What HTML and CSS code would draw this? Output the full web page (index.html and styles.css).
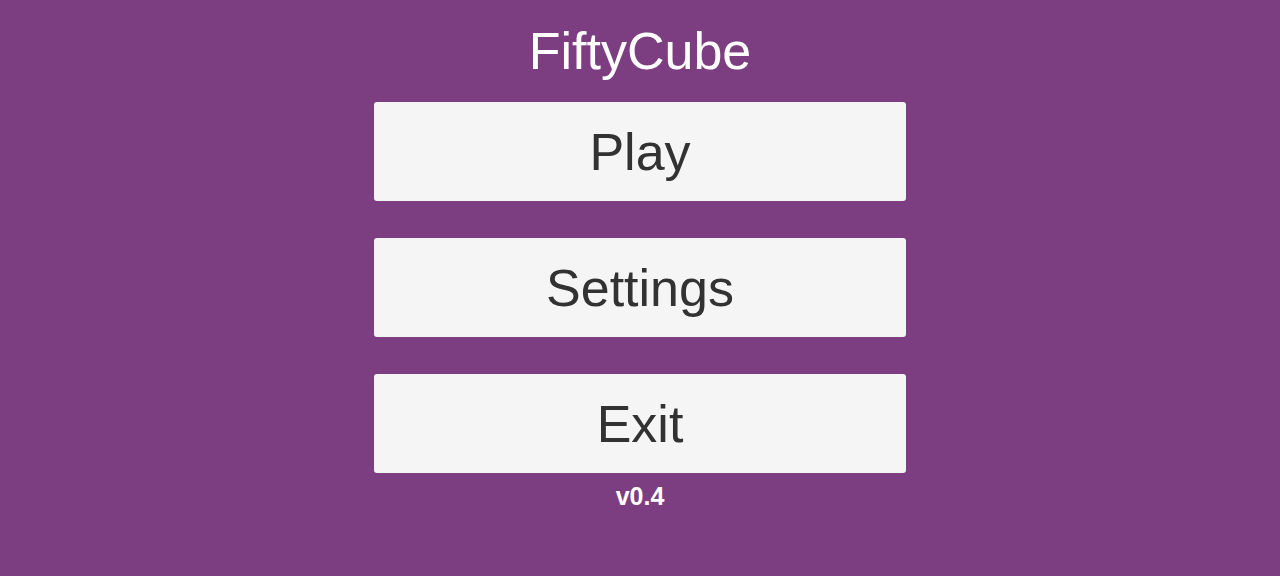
FILE: index.html
```html
<!DOCTYPE html>
<html>
<head>
<meta charset="utf-8">
<link rel="stylesheet" href="styles.css">
</head>
<body>
<main class="menu">
  <h1 class="title">FiftyCube</h1>
  <div class="buttons">
    <button class="btn">Play</button>
    <button class="btn">Settings</button>
    <button class="btn">Exit</button>
  </div>
  <div class="version">v0.4</div>
</main>
</body>
</html>
```

FILE: styles.css
```css
html, body {
  margin: 0;
  padding: 0;
  height: 100%;
}
body {
  background: #7d3e81;
  font-family: "Liberation Sans", Arial, sans-serif;
  overflow: hidden;
}
.menu {
  display: flex;
  flex-direction: column;
  align-items: center;
  padding-top: 25px;
}
.title {
  margin: 0;
  font-size: 52px;
  font-weight: normal;
  line-height: 52px;
  height: 52px;
  color: #ffffff;
}
.buttons {
  display: flex;
  flex-direction: column;
  gap: 37px;
  margin-top: 25px;
}
.btn {
  width: 532px;
  height: 99px;
  border: none;
  border-radius: 3px;
  background: #f5f5f5;
  color: #323232;
  font-family: "Liberation Sans", Arial, sans-serif;
  font-size: 52px;
  line-height: 1;
  padding: 0;
  display: flex;
  align-items: center;
  justify-content: center;
}
.version {
  margin-top: 9px;
  font-size: 25px;
  font-weight: bold;
  line-height: 29px;
  color: #ffffff;
}
```
